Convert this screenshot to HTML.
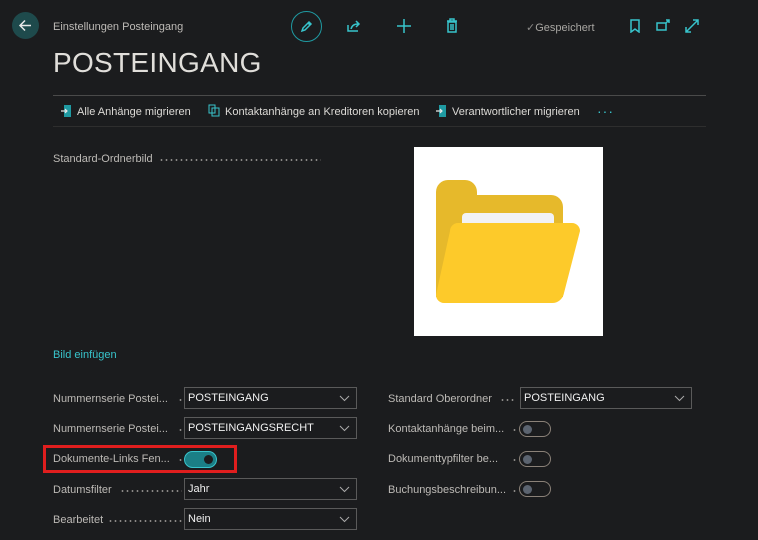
<!DOCTYPE html>
<html><head><meta charset="utf-8"><style>
*{margin:0;padding:0;box-sizing:border-box}
body{width:758px;height:540px;background:#1b1c1e;font-family:"Segoe UI","Liberation Sans",sans-serif;color:#c8c6c4;position:relative;overflow:hidden;font-size:11px}
.a{position:absolute}
.lbl{position:absolute;color:#bdbab6;font-size:11px;white-space:nowrap}
.dots{position:absolute;height:2px;background-image:radial-gradient(circle,#8a8886 0.8px,transparent 1px);background-size:5px 2px;background-repeat:repeat-x}
.sel{position:absolute;height:22px;border:1px solid #5a5a5a;background:#1b1c1e;color:#f0f0f0;font-size:11px;padding:4px 0 0 3px}
.sel svg{position:absolute;right:6px;top:7px}
.tg{position:absolute;width:32px;height:16px;border-radius:8px;border:1px solid #8a8178}
.tg i{position:absolute;left:3px;top:3px;width:9px;height:9px;border-radius:50%;background:#5c6470}
.ic{position:absolute;stroke:#38c4cc;fill:none;stroke-width:1.5}
</style></head><body>
<div class="a" style="left:12px;top:12px;width:27px;height:27px;border-radius:50%;background:#1e4a4c"></div>
<svg class="a" style="left:18px;top:18px" width="15" height="15" viewBox="0 0 15 15"><path d="M13 7.5H2M7 2.5L2 7.5L7 12.5" stroke="#e8e8e8" stroke-width="1.5" fill="none"/></svg>
<div class="lbl" style="left:53px;top:21px;color:#bdbab6">Einstellungen Posteingang</div>
<div class="a" style="left:53px;top:47px;font-size:28px;color:#e0deda;letter-spacing:0.3px;font-weight:300">POSTEINGANG</div>

<div class="a" style="left:291px;top:11px;width:31px;height:31px;border-radius:50%;border:1.5px solid #1f9aa2"></div>
<svg class="ic" style="left:299px;top:19px" width="15" height="15" viewBox="0 0 15 15"><path d="M3 12l1-3 6-6 2 2-6 6zM9 4l2 2"/></svg>
<svg class="ic" style="left:346px;top:18px" width="16" height="16" viewBox="0 0 16 16"><path d="M2 7v6h10M5 11c1-4 4-5 7-5M10 3l3 3-3 3"/></svg>
<svg class="ic" style="left:396px;top:18px" width="16" height="16" viewBox="0 0 16 16"><path d="M8 1v14M1 8h14"/></svg>
<svg class="ic" style="left:445px;top:18px" width="14" height="16" viewBox="0 0 14 16"><path d="M2 3h10M5 3V1h4v2M3 4h8v10H3zM6 6v6M8 6v6"/></svg>
<div class="lbl" style="left:526px;top:21px;color:#a8a6a2"><span style="color:#8a8886">✓</span>Gespeichert</div>
<svg class="ic" style="left:629px;top:19px" width="12" height="14" viewBox="0 0 12 14"><path d="M2 1h8v12l-4-3-4 3z"/></svg>
<svg class="ic" style="left:656px;top:19px" width="15" height="13" viewBox="0 0 15 13"><path d="M1 4h9v7H1zM10 4l3-3M10 1h3v3"/></svg>
<svg class="ic" style="left:685px;top:19px" width="14" height="14" viewBox="0 0 14 14"><path d="M1 13L13 1M8 1h5v5M1 8v5h5"/></svg>

<div class="a" style="left:53px;top:95px;width:653px;height:1px;background:#4a4a4a"></div>
<div class="a" style="left:53px;top:126px;width:653px;height:1px;background:#2e2e2e"></div>
<svg class="a" style="left:61px;top:104px" width="11" height="14" viewBox="0 0 11 14"><path d="M3 1h7v12H3z" fill="#1f9aa2"/><path d="M0 7h6M4 5l2 2-2 2" stroke="#e8e8e8" stroke-width="1.2" fill="none"/></svg>
<div class="lbl" style="left:77px;top:106px;color:#dcdad6">Alle Anhänge migrieren</div>
<svg class="a" style="left:208px;top:104px" width="13" height="13" viewBox="0 0 13 13"><path d="M1 1h6v8H1zM4 4h7v8H4z" stroke="#38c4cc" fill="none"/></svg>
<div class="lbl" style="left:225px;top:106px;color:#dcdad6">Kontaktanhänge an Kreditoren kopieren</div>
<svg class="a" style="left:436px;top:104px" width="11" height="14" viewBox="0 0 11 14"><path d="M3 1h7v12H3z" fill="#1f9aa2"/><path d="M0 7h6M4 5l2 2-2 2" stroke="#e8e8e8" stroke-width="1.2" fill="none"/></svg>
<div class="lbl" style="left:452px;top:106px;color:#dcdad6">Verantwortlicher migrieren</div>
<div class="lbl" style="left:597px;top:103px;color:#38c4cc;font-size:14px;letter-spacing:1px">···</div>

<div class="lbl" style="left:53px;top:153px">Standard-Ordnerbild</div>
<div class="dots" style="left:159px;top:159px;width:162px"></div>
<div class="a" style="left:414px;top:147px;width:189px;height:189px;background:#fff">
<svg width="189" height="189" viewBox="0 0 189 189"><path d="M22 45a12 12 0 0 1 12-12h17a12 12 0 0 1 12 12v3h74a12 12 0 0 1 12 12v90H22z" fill="#e6b92b"/><rect x="48" y="66" width="92" height="30" rx="4" fill="#f2f2f4"/><path d="M36 84a8 8 0 0 1 8-8h114a8 8 0 0 1 8 8l-16 62a12 12 0 0 1-12 10H30a8 8 0 0 1-8-8z" fill="#fdca2a"/></svg></div>
<div class="lbl" style="left:53px;top:349px;color:#38c4cc">Bild einfügen</div>

<div class="lbl" style="left:53px;top:393px">Nummernserie Postei...</div><div class="dots" style="left:178px;top:399px;width:5px"></div>
<div class="sel" style="left:184px;top:387px;width:173px">POSTEINGANG<svg width="11" height="7"><path d="M1 1l4.5 4.5L10 1" stroke="#aaa" fill="none"/></svg></div>
<div class="lbl" style="left:53px;top:423px">Nummernserie Postei...</div><div class="dots" style="left:178px;top:429px;width:5px"></div>
<div class="sel" style="left:184px;top:417px;width:173px">POSTEINGANGSRECHT<svg width="11" height="7"><path d="M1 1l4.5 4.5L10 1" stroke="#aaa" fill="none"/></svg></div>
<div class="a" style="left:43px;top:445px;width:194px;height:28px;border:3px solid #e01e1e"></div>
<div class="lbl" style="left:53px;top:453px">Dokumente-Links Fen...</div><div class="dots" style="left:178px;top:459px;width:5px"></div>
<div class="a" style="left:184px;top:451px;width:33px;height:17px;border-radius:9px;background:#1b7f86;border:1px solid #38c4cc"><i style="position:absolute;right:3px;top:3px;width:9px;height:9px;border-radius:50%;background:#1b1c1e"></i></div>
<div class="lbl" style="left:53px;top:484px">Datumsfilter</div><div class="dots" style="left:120px;top:490px;width:62px"></div>
<div class="sel" style="left:184px;top:478px;width:173px">Jahr<svg width="11" height="7"><path d="M1 1l4.5 4.5L10 1" stroke="#aaa" fill="none"/></svg></div>
<div class="lbl" style="left:53px;top:514px">Bearbeitet</div><div class="dots" style="left:108px;top:520px;width:74px"></div>
<div class="sel" style="left:184px;top:508px;width:173px">Nein<svg width="11" height="7"><path d="M1 1l4.5 4.5L10 1" stroke="#aaa" fill="none"/></svg></div>

<div class="lbl" style="left:388px;top:393px">Standard Oberordner</div><div class="dots" style="left:500px;top:399px;width:16px"></div>
<div class="sel" style="left:520px;top:387px;width:172px">POSTEINGANG<svg width="11" height="7"><path d="M1 1l4.5 4.5L10 1" stroke="#aaa" fill="none"/></svg></div>
<div class="lbl" style="left:388px;top:423px">Kontaktanhänge beim...</div><div class="dots" style="left:512px;top:429px;width:5px"></div>
<div class="tg" style="left:519px;top:421px"><i></i></div>
<div class="lbl" style="left:388px;top:453px">Dokumenttypfilter be...</div><div class="dots" style="left:512px;top:459px;width:5px"></div>
<div class="tg" style="left:519px;top:451px"><i></i></div>
<div class="lbl" style="left:388px;top:484px">Buchungsbeschreibun...</div><div class="dots" style="left:512px;top:490px;width:5px"></div>
<div class="tg" style="left:519px;top:481px"><i></i></div>
</body></html>
